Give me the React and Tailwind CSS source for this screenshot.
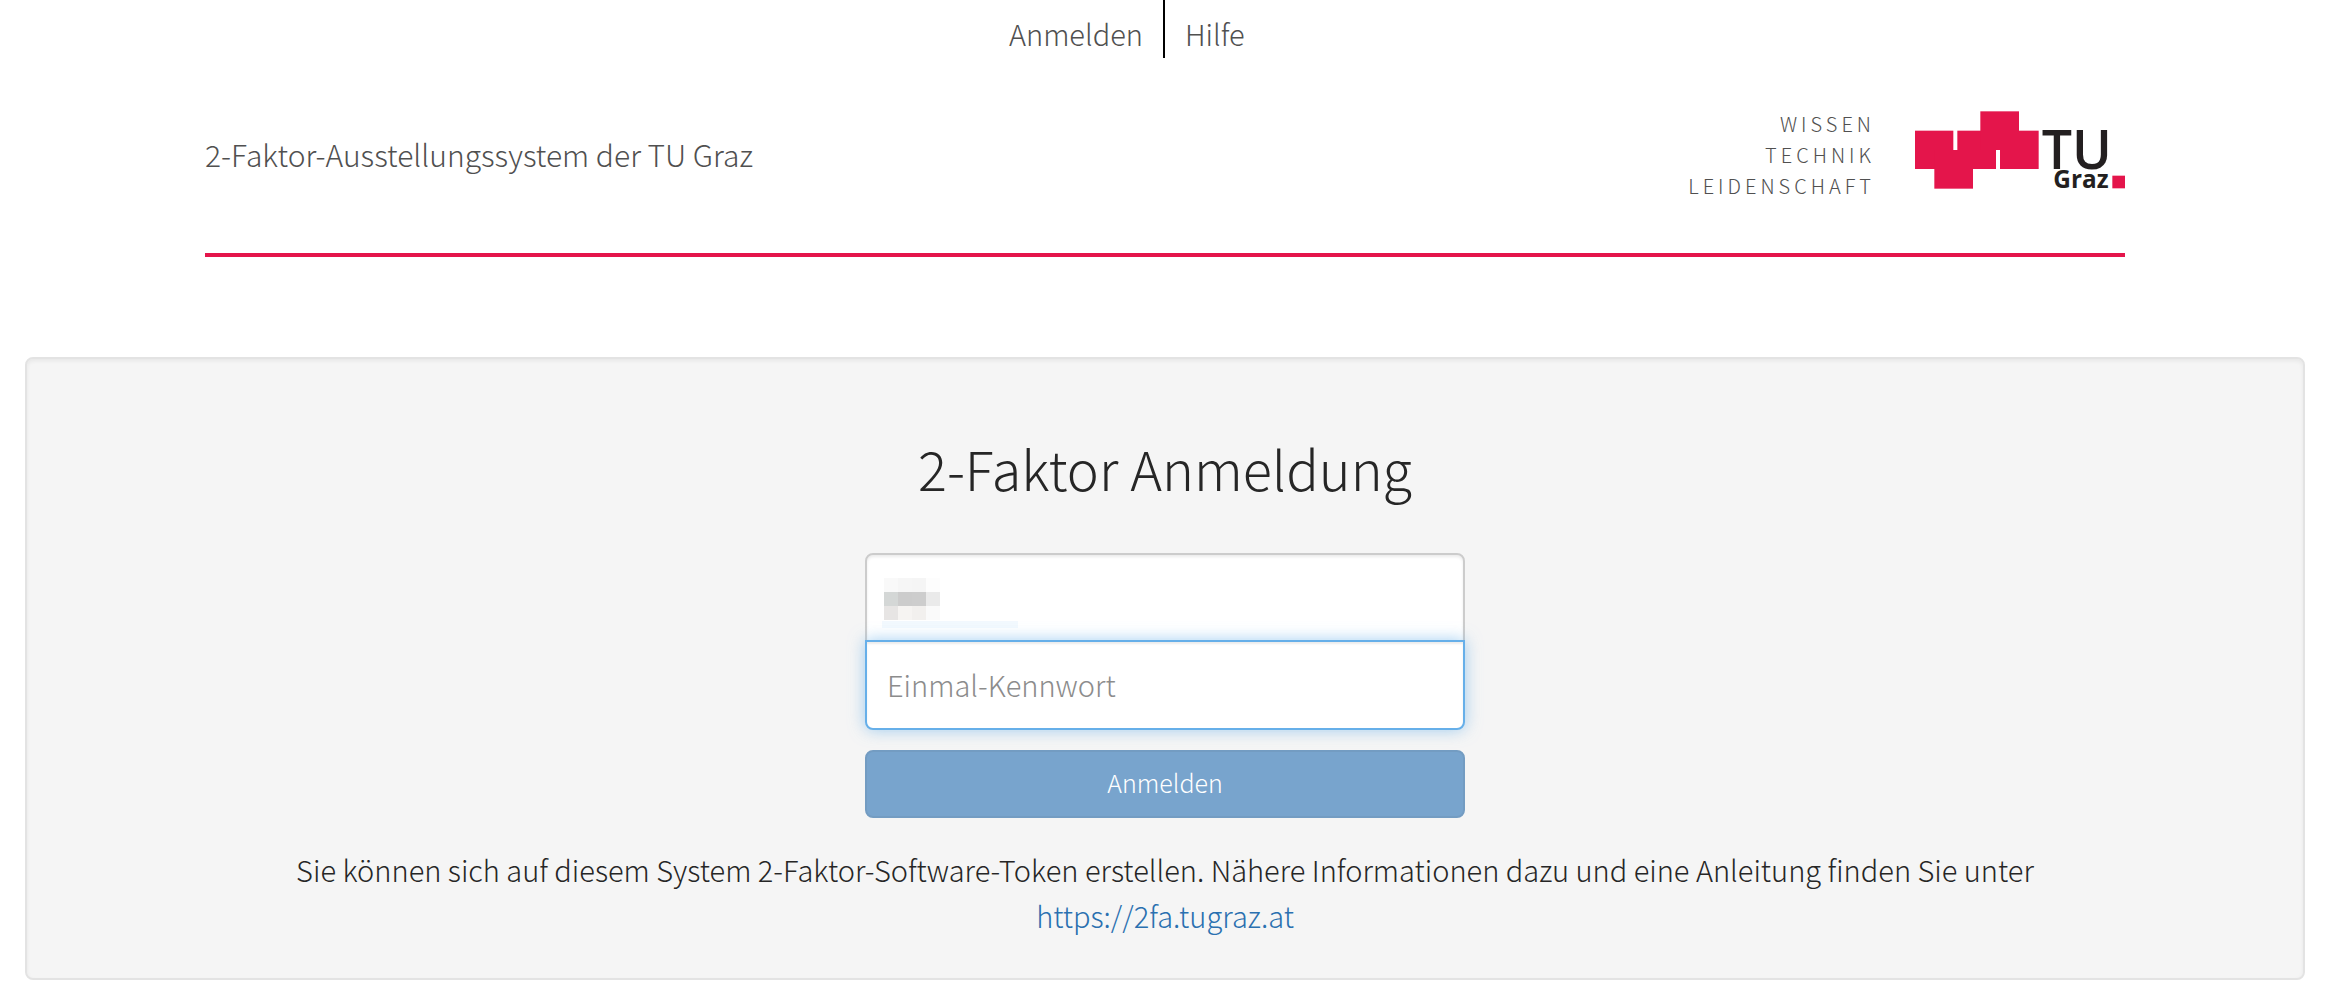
const mosaic = [
  "bg-[#f9f9f9]", "bg-[#f6f6f6]", "bg-[#f5f5f5]", "bg-[#fdfdfd]",
  "bg-[#d4d7d6]", "bg-[#cccccc]", "bg-[#cdcdcd]", "bg-[#eaeaea]",
  "bg-[#e7e5e4]", "bg-[#f6f4f2]", "bg-[#f2f0ee]", "bg-[#fafafa]",
];

function Logo() {
  return (
    <svg viewBox="735 63 630 234" className="mt-px h-[78px] w-[210px] overflow-visible" role="img" aria-label="TU Graz">
      <g fill="#e4154b">
        <rect x="735" y="122" width="115" height="115" />
        <rect x="862" y="122" width="116" height="115" />
        <rect x="990" y="122" width="116" height="115" />
        <rect x="793" y="180" width="116" height="116" />
        <rect x="931" y="64" width="116" height="116" />
        <rect x="1327" y="257" width="38" height="38" />
      </g>
      <g fill="#231f20" fontFamily="Open Sans, sans-serif">
        <text x="1115" y="237" fontSize="161" fontWeight="650">TU</text>
        <text x="1150" y="295" fontSize="73" fontWeight="700">Graz</text>
      </g>
    </svg>
  );
}

export default function App() {
  return (
    <div className="bg-white font-['Noto_Sans_CJK_SC',sans-serif] font-light text-[#262626]">
      <nav className="grid grid-cols-2 text-[29px] leading-[50px] text-[#505050]">
        <div className="flex justify-end border-r-2 border-black px-5 pt-2">
          <a href="#anmelden">Anmelden</a>
        </div>
        <div className="px-5 pt-2">
          <a href="#hilfe">Hilfe</a>
        </div>
      </nav>

      <header className="mx-[205px] flex h-[199px] items-start justify-between border-b-4 border-[#e4154b] text-[#505050]">
        <div className="pt-[72px] text-[30px] leading-[48px]">2-Faktor-Ausstellungssystem der TU Graz</div>
        <div className="flex gap-10 pt-[52px]">
          <div className="-mt-0.5 text-right text-[20px] leading-[31px] tracking-[4px]">
            <div>WISSEN</div>
            <div>TECHNIK</div>
            <div>LEIDENSCHAFT</div>
          </div>
          <Logo />
        </div>
      </header>

      <main className="mx-[25px] mt-[100px] rounded-lg border-2 border-[#e3e3e3] bg-[#f5f5f5] px-10 pt-[69px] pb-[39px] text-center shadow-[inset_0_2px_4px_rgba(0,0,0,0.06)]">
        <h1 className="text-[54px] leading-[80px]">2-Faktor Anmeldung</h1>
        <form className="mx-auto mt-[45px] w-[600px]" onSubmit={(e) => e.preventDefault()}>
          <div className="relative">
            <input
              type="text"
              aria-label="Benutzername"
              className="block h-[89px] w-full rounded-t-lg border-2 border-[#cccccc] bg-white px-5 text-[29px] shadow-[inset_0_2px_3px_rgba(0,0,0,0.08)] outline-none"
            />
            <div className="pointer-events-none absolute top-[25px] left-[19px] grid w-[56px] grid-cols-4">
              {mosaic.map((c, i) => (
                <span key={i} className={"h-[14px] " + c} />
              ))}
            </div>
            <div className="pointer-events-none absolute top-[68px] left-[17px] h-[7px] w-[136px] bg-[#f3f9fe]" />
          </div>
          <input
            type="password"
            aria-label="Einmal-Kennwort"
            placeholder="Einmal-Kennwort"
            className="relative -mt-[2px] block h-[90px] w-full rounded-b-lg border-2 border-[#66afe9] bg-white px-5 pb-0.5 text-[29px] shadow-[inset_0_2px_2px_rgba(0,0,0,0.075),0_0_16px_rgba(102,175,233,0.6)] outline-none placeholder:text-[#8c8c8c]"
          />
          <button
            type="submit"
            className="mt-5 block h-[68px] w-full rounded-lg border-2 border-[#739cc2] bg-[#78a4cd] pb-0.5 text-[25px] text-white"
          >
            Anmelden
          </button>
        </form>
        <p className="mt-[28px] mb-px text-[29px] leading-[46px]">
          Sie können sich auf diesem System 2-Faktor-Software-Token erstellen. Nähere Informationen dazu und eine Anleitung finden Sie unter
          <br />
          <a href="https://2fa.tugraz.at" className="text-[#2a70b0]">https://2fa.tugraz.at</a>
        </p>
      </main>
    </div>
  );
}
